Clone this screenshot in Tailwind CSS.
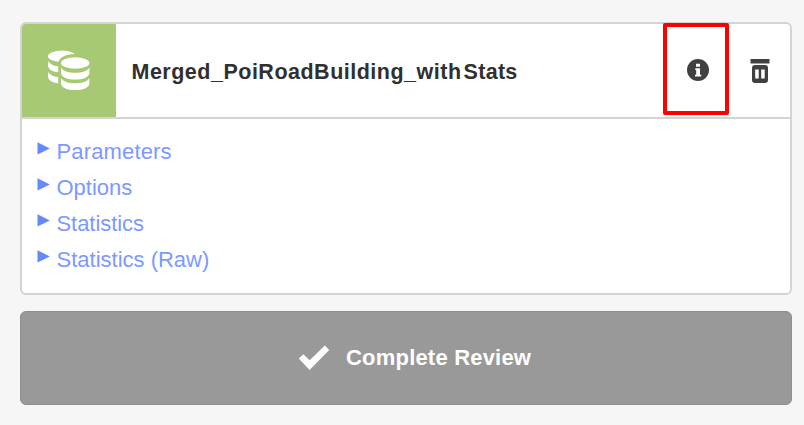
<!DOCTYPE html>
<html lang="en">
<head>
<meta charset="utf-8">
<title>Review</title>
<script src="https://cdn.jsdelivr.net/npm/@tailwindcss/browser@4"></script>
</head>
<body class="h-[425px] overflow-hidden bg-[#f6f6f6] pt-[22px] pr-[12.5px] pl-[20px] font-['Liberation_Sans',Arial,sans-serif]">
  <section class="h-[273px] rounded-[6px] border-2 border-[#d4d4d4] bg-white">
    <header class="flex h-[95px] border-b-2 border-[#d4d4d4]">
      <div class="flex w-[94px] shrink-0 items-center justify-center rounded-tl-[4px] bg-[#a7c974] pr-[1px] pb-[2px]">
        <svg class="h-[44px] w-[46px]" viewBox="46 47 46 44" fill="#fff">
          <g>
            <ellipse cx="62" cy="55.3" rx="14" ry="5.7"/>
            <path d="M48 60.3q3.5 4.7 11 5.2v6q-9.500-1.200-11-6z"/>
            <path d="M48 71q3.500 4.700 11 5.200v6.300q-9.500-1.200-11-6z"/>
          </g>
          <path fill="#a7c974" d="M58.200 62.200c0-5 7.300-9.200 16.500-9.200S92 57 92 62v22H58.200z"/>
          <ellipse cx="75.200" cy="62" rx="14.200" ry="5.800"/>
          <path d="M61 66.800c3 3.800 8 5 14.200 5s11.200-1.200 14.200-5V72c-.4 4.300-6.500 6.600-14.200 6.600S61.400 76.300 61 72z"/>
          <path d="M61 77.300c3 3.800 8 5 14.200 5s11.200-1.200 14.200-5v5.200c-.4 4.300-6.500 6.600-14.200 6.600s-13.800-2.300-14.200-6.600z"/>
        </svg>
      </div>
      <h1 class="flex-1 pt-[36px] pl-[15.500px] text-[21.500px] leading-[24px] font-bold tracking-[0.500px] whitespace-nowrap text-[#303030]">Merged_PoiRoadBuilding_with<span class="ml-[2px] tracking-[0.300px]">Stats</span></h1>
      <button class="relative z-10 -mt-[1px] flex h-[92px] w-[66px] items-center justify-center rounded-[2px] border-4 border-[#fe0000] pt-[2px] pl-[3px]" aria-label="Information">
        <svg class="h-[22px] w-[22px]" viewBox="0 0 22 22">
          <circle cx="11" cy="11" r="11" fill="#404040"/>
          <path fill="#fff" d="M9 4.800h4v3H9zM8.300 9.300H13v6.400h1.200v1.700H8v-1.700h1.200V11h-.9z"/>
        </svg>
      </button>
      <button class="flex w-[60.5px] justify-center pt-[35px] pl-[2px]" aria-label="Delete">
        <svg class="h-[24px] w-[20px]" viewBox="0 0 20 24">
          <path fill="#404040" d="M.500 0h19v4.500H.500z"/>
          <path fill="#404040" fill-rule="evenodd" d="M2 9q0-3 3-3h10q3 0 3 3v12q0 3-3 3H5q-3 0-3-3zm3.200 1.500v9h3.500v-9zm6 0v9h3.500v-9z"/>
        </svg>
      </button>
    </header>
    <ul class="pt-[15px] pl-[15px] text-[22px] leading-[36px] text-[#7c99ff]">
      <li class="flex h-[36px]"><svg class="mt-[8px] mr-[6.500px] h-[13px] w-[13px]" viewBox="0 0 13 13"><path fill="#6489ff" d="M.500.200 12.800 6.400.500 12.600z"/></svg><span class="tracking-[0.150px]">Parameters</span></li>
      <li class="flex h-[36px]"><svg class="mt-[8px] mr-[6.500px] h-[13px] w-[13px]" viewBox="0 0 13 13"><path fill="#6489ff" d="M.500.200 12.800 6.400.500 12.600z"/></svg><span>Options</span></li>
      <li class="flex h-[36px]"><svg class="mt-[8px] mr-[6.500px] h-[13px] w-[13px]" viewBox="0 0 13 13"><path fill="#6489ff" d="M.500.200 12.800 6.400.500 12.600z"/></svg><span class="-tracking-[0.050px]">Statistics</span></li>
      <li class="flex h-[36px]"><svg class="mt-[8px] mr-[6.500px] h-[13px] w-[13px]" viewBox="0 0 13 13"><path fill="#6489ff" d="M.500.200 12.800 6.400.500 12.600z"/></svg><span>Statistics (Raw)</span></li>
    </ul>
  </section>
  <button class="mt-[16px] flex h-[94px] w-full items-center rounded-[6px] border border-[#8e8e8e] bg-[#999999] pb-[1px] pl-[277px] text-[22px] font-bold text-white">
    <svg class="mr-[16px] h-[26px] w-[32px]" viewBox="0 0 32 26"><path fill="#fff" d="M.800 13.500 5.300 9.300l6.400 6L26.800.500l4.400 4.400L11.600 25z"/></svg>
    <span class="tracking-[0.200px]">Complete Review</span>
  </button>
</body>
</html>
